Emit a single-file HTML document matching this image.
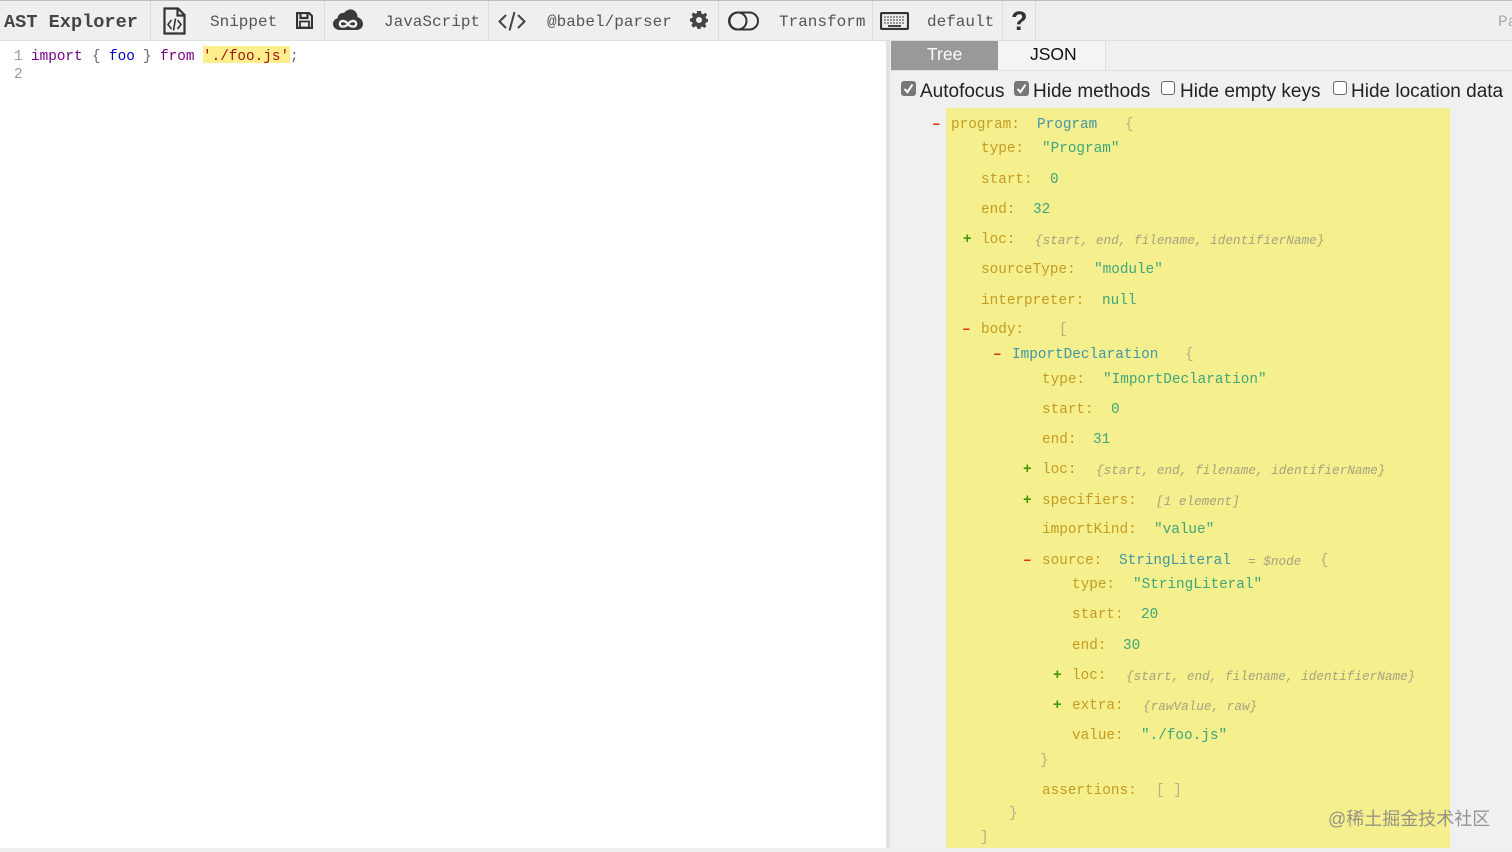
<!DOCTYPE html>
<html><head><meta charset="utf-8"><title>AST Explorer</title>
<style>
html,body{margin:0;padding:0;width:1512px;height:852px;overflow:hidden;background:#fff}
body{position:relative;font-family:"Liberation Mono",monospace;font-size:14.35px}
div,span,svg{position:absolute}
span{white-space:pre;line-height:18px;height:18px;margin-top:2px;filter:blur(.3px)}
.h{font-size:16px;color:#555;top:11px}
.sep{top:1px;width:1px;height:39px;background:#dcdcdc}
.k{color:#c49c22}.s{color:#3fa67c;font-family:"Liberation Mono",monospace}
.t{color:#3f97a6}.b{color:#b5b08a}.m{color:#e03010;font-weight:bold}.p{color:#3c9a00;font-weight:bold}
.i{color:#a5a27f;font-style:italic;font-size:12.7px}
.l{font-family:"Liberation Sans",sans-serif;font-size:19px;color:#222;top:81px}
.cb{width:15px;height:15px;border-radius:3px}
.on{background:#777}
.off{background:#fff;border:1px solid #666;width:12px;height:12px}
</style></head><body>

<div style="left:0;top:0;width:1512px;height:41px;background:#efefef;border-top:1px solid #bdbdbd;box-sizing:border-box;border-bottom:1px solid #dedede"></div>
<div class="sep" style="left:150px"></div><div class="sep" style="left:324px"></div><div class="sep" style="left:488px"></div><div class="sep" style="left:718px"></div><div class="sep" style="left:872px"></div><div class="sep" style="left:1002px"></div><div class="sep" style="left:1035px"></div>

<span style="left:4px;top:12px;font-size:18.6px;font-weight:bold;color:#444;font-family:'Liberation Mono',monospace">AST Explorer</span>
<span class="h" style="left:210px">Snippet</span>
<span class="h" style="left:384px">JavaScript</span>
<span class="h" style="left:547px">@babel/parser</span>
<span class="h" style="left:779px">Transform</span>
<span class="h" style="left:927px">default</span>
<span class="h" style="left:1498px;color:#aaa">Pa</span>

<svg style="left:163px;top:7px" width="23" height="28" viewBox="0 0 23 28" fill="none" stroke="#333" stroke-width="2.2"><path d="M1.500 1.500H15L21.500 8V26.500H1.500Z"/><path d="M14.500 1.500V8.500H21.500"/><path d="M8.500 13L5 17.500L8.500 22M14.500 13L18 17.500L14.500 22M12.500 11.500L10.500 23.500" stroke-width="1.600"/></svg>
<svg style="left:296px;top:12px" width="17" height="17" viewBox="0 0 17 17" fill="none" stroke="#333" stroke-width="2.2"><path d="M1 1H13L16 4V16H1Z"/><path d="M4.500 1.500V6H11.500V1.500"/><path d="M4 9.500H13V15.500H4Z" stroke-width="1.800"/></svg>
<svg style="left:333px;top:9px" width="30" height="22" viewBox="0 0 30 22"><path fill="#3a3a3a" d="M7 21C3 21 0 18.300 0 15C0 12 2 10 4.500 9.300C5 5.500 8 3.500 11 4C13 1.500 16 0 18.500 .5C22 1 24.500 4 24.500 8C27.500 9 30 11.500 30 15C30 18.500 27 21 23.500 21Z"/><path fill="none" stroke="#efefef" stroke-width="2.400" d="M15 15C13 12.500 11.500 12 10 12C8 12 6.800 13.200 6.800 14.800C6.800 16.400 8 17.600 10 17.600C11.500 17.600 13 17.500 15 15C17 12.500 18.500 12 20 12C22 12 23.200 13.200 23.200 14.800C23.200 16.400 22 17.600 20 17.600C18.500 17.600 17 17.500 15 15Z"/></svg>
<svg style="left:498px;top:11px" width="28" height="20" viewBox="0 0 28 20" fill="none" stroke="#444" stroke-width="2"><path d="M8 4L1.500 10.500L8 17M20 4L26.500 10.500L20 17M16.500 1L11.500 19.500"/></svg>
<svg style="left:690px;top:11px" width="18" height="18" viewBox="0 0 18 18"><path fill="#444" fill-rule="evenodd" d="M7 0H11L11.500 2.600L13.200 3.300L15.400 1.800L17.200 4L15.500 6L16.100 7.600L18 8V11L15.900 11.500L15.200 13.200L16.400 15.300L14.300 17L12.400 15.500L10.900 16.100L10.500 18H7.500L7 15.900L5.400 15.300L3.500 16.600L1.300 14.500L2.700 12.500L2.100 11L0 10.500V7.500L2.200 7L2.800 5.400L1.500 3.500L3.500 1.500L5.500 2.800L6.900 2.200ZM9 6A3 3 0 1 0 9 12A3 3 0 1 0 9 6Z"/></svg>
<svg style="left:728px;top:11px" width="31" height="20" viewBox="0 0 31 20" fill="none" stroke="#333" stroke-width="2"><rect x="1" y="1.500" width="29" height="17" rx="8.500"/><circle cx="10" cy="10" r="8.500"/></svg>
<svg style="left:880px;top:12px" width="29" height="18" viewBox="0 0 29 18" fill="none" stroke="#333"><rect x="1" y="1" width="27" height="16" rx="1" stroke-width="2.200"/><path d="M4 5H25M4 8H25M4 11H25" stroke="#777" stroke-width="1.600" stroke-dasharray="2 1"/><path d="M8 14H21" stroke-width="1.800"/></svg>
<span style="left:1011px;top:9px;font-family:'Liberation Sans',sans-serif;font-weight:bold;font-size:27px;line-height:20px;height:20px;color:#333">?</span>

<span style="left:14px;top:46px;color:#999">1</span>
<span style="left:14px;top:64px;color:#999">2</span>
<div style="left:203px;top:46px;width:87px;height:17px;background:#fdf08c"></div>
<span style="left:31px;top:46px;color:#708">import</span>
<span style="left:92px;top:46px;color:#666">{</span>
<span style="left:109px;top:46px;color:#00c">foo</span>
<span style="left:143px;top:46px;color:#666">}</span>
<span style="left:160px;top:46px;color:#708">from</span>
<span style="left:203px;top:46px;color:#a11">'./foo.js'</span>
<span style="left:290px;top:46px;color:#666">;</span>

<div style="left:886px;top:41px;width:626px;height:811px;background:#f0f0f0"></div>
<div style="left:886px;top:41px;width:4px;height:811px;background:#e2e2e2"></div>
<div style="left:891px;top:70px;width:621px;height:1px;background:#e0e0e0"></div>
<div style="left:891px;top:41px;width:107px;height:29px;background:#999"></div>
<div style="left:998px;top:41px;width:107px;height:29px;background:#f4f4f4;border-right:1px solid #dedede"></div>
<span style="left:927px;top:43px;font:17.500px/18px 'Liberation Sans',sans-serif;color:#fff">Tree</span>
<span style="left:1030px;top:43px;font:17.500px/18px 'Liberation Sans',sans-serif;color:#111">JSON</span>

<div class="cb on" style="left:901px;top:81px"><svg style="left:2px;top:2px" width="11" height="11" viewBox="0 0 11 11" fill="none" stroke="#fff" stroke-width="2"><path d="M1.500 6L4.500 9L9.500 1.500"/></svg></div>
<span class="l" style="left:920px">Autofocus</span>
<div class="cb on" style="left:1014px;top:81px"><svg style="left:2px;top:2px" width="11" height="11" viewBox="0 0 11 11" fill="none" stroke="#fff" stroke-width="2"><path d="M1.500 6L4.500 9L9.500 1.500"/></svg></div>
<span class="l" style="left:1033px">Hide methods</span>
<div class="cb off" style="left:1161px;top:81px"></div>
<span class="l" style="left:1180px">Hide empty keys</span>
<div class="cb off" style="left:1333px;top:81px"></div>
<span class="l" style="left:1351px">Hide location data</span>

<div style="left:946px;top:108px;width:504px;height:740px;background:#f5ef8e"></div>
<div style="left:0;top:848px;width:1512px;height:4px;background:#eee"></div>

<span class="m" style="left:932px;top:114px">–</span><span class="k" style="left:951px;top:114px">program:</span><span class="t" style="left:1037px;top:114px">Program</span><span class="b" style="left:1125px;top:114px">{</span>
<span class="k" style="left:981px;top:138px">type:</span><span class="s" style="left:1042px;top:138px">"Program"</span>
<span class="k" style="left:981px;top:169px">start:</span><span class="s" style="left:1050px;top:169px">0</span>
<span class="k" style="left:981px;top:199px">end:</span><span class="s" style="left:1033px;top:199px">32</span>
<span class="p" style="left:963px;top:229px">+</span><span class="k" style="left:981px;top:229px">loc:</span><span class="i" style="left:1035px;top:230px">{start, end, filename, identifierName}</span>
<span class="k" style="left:981px;top:259px">sourceType:</span><span class="s" style="left:1094px;top:259px">"module"</span>
<span class="k" style="left:981px;top:290px">interpreter:</span><span class="s" style="left:1102px;top:290px">null</span>
<span class="m" style="left:962px;top:319px">–</span><span class="k" style="left:981px;top:319px">body:</span><span class="b" style="left:1059px;top:319px">[</span>
<span class="m" style="left:993px;top:344px">–</span><span class="t" style="left:1012px;top:344px">ImportDeclaration</span><span class="b" style="left:1185px;top:344px">{</span>
<span class="k" style="left:1042px;top:369px">type:</span><span class="s" style="left:1103px;top:369px">"ImportDeclaration"</span>
<span class="k" style="left:1042px;top:399px">start:</span><span class="s" style="left:1111px;top:399px">0</span>
<span class="k" style="left:1042px;top:429px">end:</span><span class="s" style="left:1093px;top:429px">31</span>
<span class="p" style="left:1023px;top:459px">+</span><span class="k" style="left:1042px;top:459px">loc:</span><span class="i" style="left:1096px;top:460px">{start, end, filename, identifierName}</span>
<span class="p" style="left:1023px;top:490px">+</span><span class="k" style="left:1042px;top:490px">specifiers:</span><span class="i" style="left:1156px;top:491px">[1 element]</span>
<span class="k" style="left:1042px;top:519px">importKind:</span><span class="s" style="left:1154px;top:519px">"value"</span>
<span class="m" style="left:1023px;top:550px">–</span><span class="k" style="left:1042px;top:550px">source:</span><span class="t" style="left:1119px;top:550px">StringLiteral</span><span class="i" style="left:1248px;top:551px">= $node</span><span class="b" style="left:1320px;top:550px">{</span>
<span class="k" style="left:1072px;top:574px">type:</span><span class="s" style="left:1133px;top:574px">"StringLiteral"</span>
<span class="k" style="left:1072px;top:604px">start:</span><span class="s" style="left:1141px;top:604px">20</span>
<span class="k" style="left:1072px;top:635px">end:</span><span class="s" style="left:1123px;top:635px">30</span>
<span class="p" style="left:1053px;top:665px">+</span><span class="k" style="left:1072px;top:665px">loc:</span><span class="i" style="left:1126px;top:666px">{start, end, filename, identifierName}</span>
<span class="p" style="left:1053px;top:695px">+</span><span class="k" style="left:1072px;top:695px">extra:</span><span class="i" style="left:1143px;top:696px">{rawValue, raw}</span>
<span class="k" style="left:1072px;top:725px">value:</span><span class="s" style="left:1141px;top:725px">"./foo.js"</span>
<span class="b" style="left:1040px;top:750px">}</span>
<span class="k" style="left:1042px;top:780px">assertions:</span><span class="b" style="left:1156px;top:780px">[ ]</span>
<span class="b" style="left:1009px;top:803px">}</span>
<span class="b" style="left:980px;top:827px">]</span>

<span style="left:1328px;top:808px;font-family:'Liberation Sans','Noto Sans CJK SC',sans-serif;font-size:18px;color:rgba(130,130,130,.85)">@稀土掘金技术社区</span>
</body></html>
